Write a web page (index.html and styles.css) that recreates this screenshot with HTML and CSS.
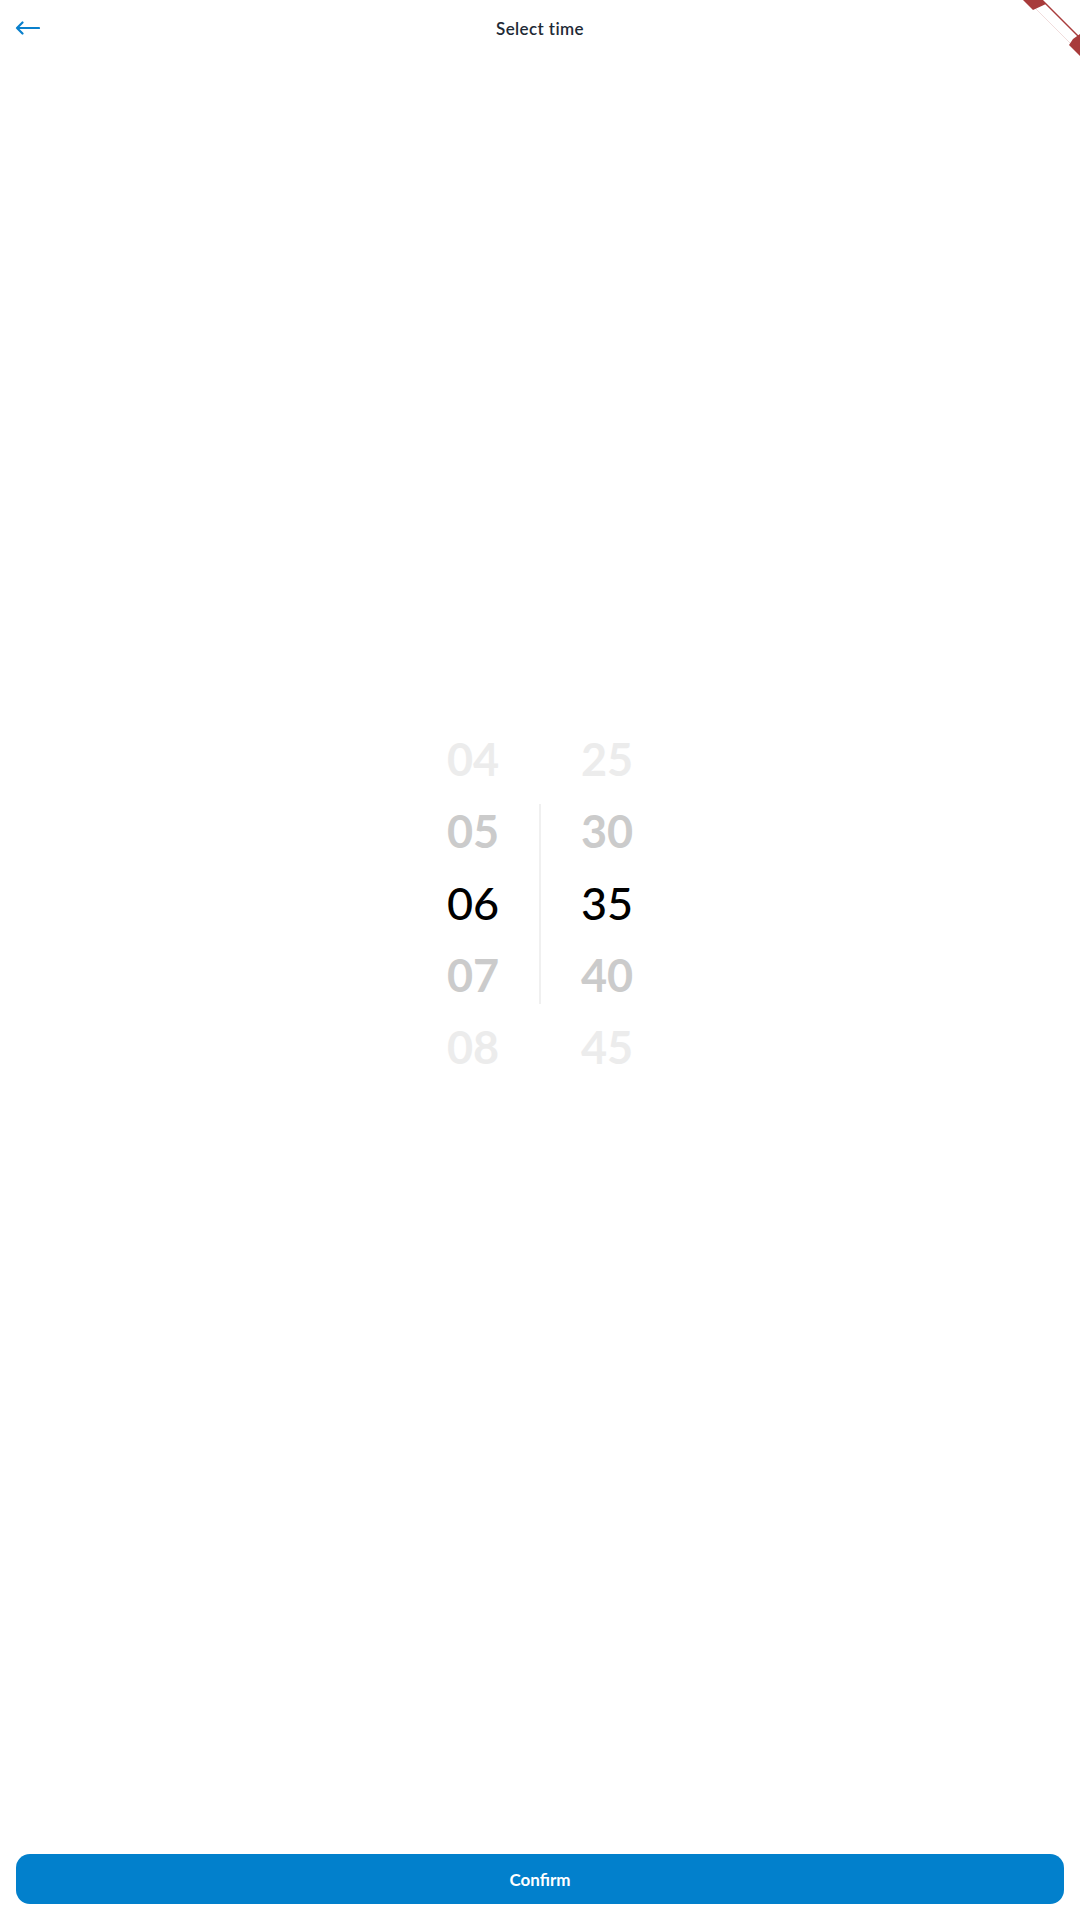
FILE: index.html
```html
<!DOCTYPE html>
<html lang="en">
<head>
<meta charset="utf-8">
<title>Select time</title>
<link rel="stylesheet" href="styles.css">
</head>
<body>
<div class="app">
  <header class="topbar">
    <button class="back" aria-label="Back">
      <svg width="25" height="14" viewBox="0 0 25 14" fill="none" stroke="#0a80cc" stroke-width="2.2" stroke-linecap="round" stroke-linejoin="round">
        <path d="M24 7H2M7.5 1.5L2 7l5.5 5.5"/>
      </svg>
    </button>
    <h1 class="title">Select time</h1>
  </header>

  <main class="content">
    <div class="picker">
      <div class="wheel">
        <div class="cell far">04</div>
        <div class="cell near">05</div>
        <div class="cell sel">06</div>
        <div class="cell near">07</div>
        <div class="cell far">08</div>
      </div>
      <div class="divider"></div>
      <div class="wheel">
        <div class="cell far">25</div>
        <div class="cell near">30</div>
        <div class="cell sel">35</div>
        <div class="cell near">40</div>
        <div class="cell far">45</div>
      </div>
    </div>
  </main>

  <footer class="footer">
    <button class="confirm">Confirm</button>
  </footer>

  <svg class="ribbon" width="60" height="60" viewBox="0 0 60 60">
    <polygon points="3,0 22,0 60,38 60,56" fill="#ffffff"/>
    <line x1="22" y1="0" x2="60" y2="38" stroke="#a83b3b" stroke-width="1.4"/>
    <line x1="14" y1="7" x2="52" y2="45" stroke="#f0dcdc" stroke-width="1"/>
    <polygon points="3,0 22,0 26,4 13,10" fill="#a83b3b"/>
    <polygon points="60,34 60,56 49,45 53,39" fill="#a83b3b"/>
  </svg>
</div>
</body>
</html>
```

FILE: styles.css
```css
html, body {
  margin: 0;
  padding: 0;
  background: #ffffff;
}

body {
  font-family: "Lato", "Inter", "Liberation Sans", sans-serif;
}

.app {
  position: relative;
  width: 1080px;
  height: 1920px;
  display: flex;
  flex-direction: column;
  overflow: hidden;
}

.topbar {
  height: 56px;
  display: flex;
  align-items: center;
  justify-content: center;
  position: relative;
  flex: none;
}

.back {
  position: absolute;
  left: 15px;
  top: 21px;
  padding: 0;
  margin: 0;
  border: 0;
  background: none;
  display: flex;
  cursor: pointer;
}

.title {
  margin: 0;
  font-size: 17px;
  font-weight: 600;
  color: #1e2a36;
  letter-spacing: 0.4px;
}

.content {
  flex: 1;
  display: flex;
  align-items: center;
  justify-content: center;
  padding-bottom: 103px;
}

.picker {
  display: flex;
  align-items: center;
}

.wheel {
  width: 132px;
  display: flex;
  flex-direction: column;
}

.cell {
  height: 72px;
  display: flex;
  align-items: center;
  justify-content: center;
  font-size: 45px;
  font-weight: 700;
  line-height: 1;
}

.cell.sel {
  color: #000000;
  font-weight: 500;
}

.cell.near {
  color: #cbcbcb;
}

.cell.far {
  color: #ececec;
}

.divider {
  width: 2px;
  height: 200px;
  background: #f0f0f0;
  flex: none;
}

.footer {
  flex: none;
  padding: 0 16px 16px;
}

.confirm {
  width: 100%;
  height: 50px;
  border: 0;
  border-radius: 14px;
  background: #0280cc;
  color: #ffffff;
  font-family: "Lato", "Inter", "Liberation Sans", sans-serif;
  font-size: 17px;
  font-weight: 700;
  cursor: pointer;
}

.ribbon {
  position: absolute;
  top: 0;
  right: 0;
}
```
